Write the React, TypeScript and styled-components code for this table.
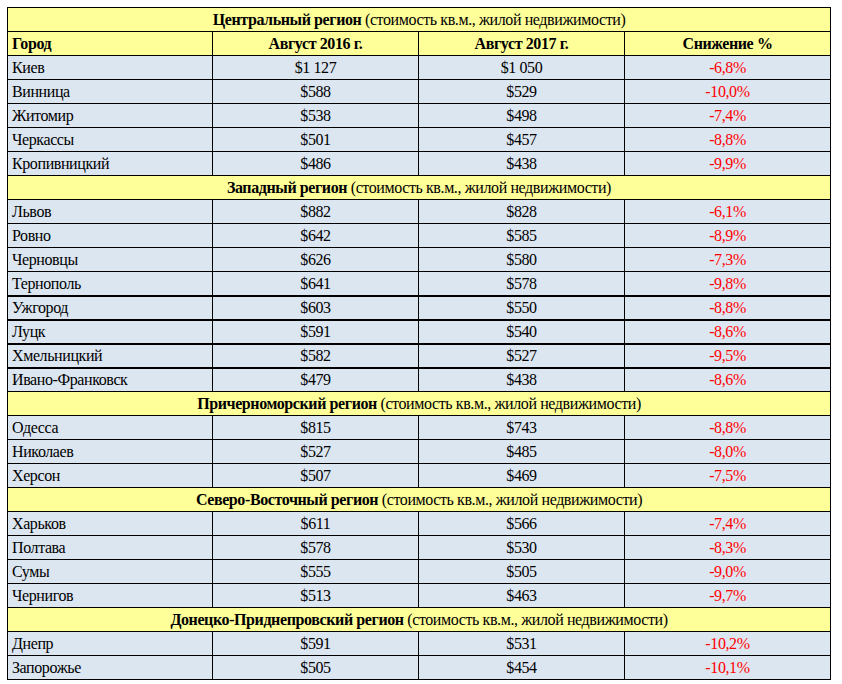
import React from 'react';
import styled, { createGlobalStyle } from 'styled-components';

const GlobalStyle = createGlobalStyle`
  body {
    margin: 0;
    padding: 7px;
    background: #ffffff;
    font-family: "Liberation Serif", "Times New Roman", serif;
  }
`

type Row = { city: string, y2016: string, y2017: string, drop: string, thick?: boolean }
type Region = { name: string, rows: Row[] }

const regions: Region[] = [
  { name: 'Центральный регион', rows: [
    { city: 'Киев', y2016: '$1 127', y2017: '$1 050', drop: '-6,8%' },
    { city: 'Винница', y2016: '$588', y2017: '$529', drop: '-10,0%' },
    { city: 'Житомир', y2016: '$538', y2017: '$498', drop: '-7,4%' },
    { city: 'Черкассы', y2016: '$501', y2017: '$457', drop: '-8,8%' },
    { city: 'Кропивницкий', y2016: '$486', y2017: '$438', drop: '-9,9%' },
  ]},
  { name: 'Западный регион', rows: [
    { city: 'Львов', y2016: '$882', y2017: '$828', drop: '-6,1%' },
    { city: 'Ровно', y2016: '$642', y2017: '$585', drop: '-8,9%' },
    { city: 'Черновцы', y2016: '$626', y2017: '$580', drop: '-7,3%' },
    { city: 'Тернополь', y2016: '$641', y2017: '$578', drop: '-9,8%' },
    { city: 'Ужгород', y2016: '$603', y2017: '$550', drop: '-8,8%', thick: true },
    { city: 'Луцк', y2016: '$591', y2017: '$540', drop: '-8,6%', thick: true },
    { city: 'Хмельницкий', y2016: '$582', y2017: '$527', drop: '-9,5%', thick: true },
    { city: 'Ивано-Франковск', y2016: '$479', y2017: '$438', drop: '-8,6%', thick: true },
  ]},
  { name: 'Причерноморский регион', rows: [
    { city: 'Одесса', y2016: '$815', y2017: '$743', drop: '-8,8%' },
    { city: 'Николаев', y2016: '$527', y2017: '$485', drop: '-8,0%' },
    { city: 'Херсон', y2016: '$507', y2017: '$469', drop: '-7,5%' },
  ]},
  { name: 'Северо-Восточный регион', rows: [
    { city: 'Харьков', y2016: '$611', y2017: '$566', drop: '-7,4%' },
    { city: 'Полтава', y2016: '$578', y2017: '$530', drop: '-8,3%' },
    { city: 'Сумы', y2016: '$555', y2017: '$505', drop: '-9,0%' },
    { city: 'Чернигов', y2016: '$513', y2017: '$463', drop: '-9,7%' },
  ]},
  { name: 'Донецко-Приднепровский регион', rows: [
    { city: 'Днепр', y2016: '$591', y2017: '$531', drop: '-10,2%' },
    { city: 'Запорожье', y2016: '$505', y2017: '$454', drop: '-10,1%' },
  ]},
]

const Table = styled.table`
  border-collapse: collapse;
  table-layout: fixed;
  width: 823px;
  font-family: "Liberation Serif", "Times New Roman", serif;
  font-size: 16px;
  letter-spacing: -0.4px;
  color: #000;
`

const Col = styled.col<{ $w: number }>`
  width: ${p => p.$w}px;
`

const Tr = styled.tr<{ $thick?: boolean }>`
  height: 24px;
  & > td, & > th {
    border-top: ${p => p.$thick ? '2px' : '1px'} solid #000;
  }
`

const Cell = styled.td<{ $left?: boolean, $red?: boolean }>`
  background: #dce6f1;
  border: 1px solid #000;
  padding: 0 4px;
  text-align: ${p => p.$left ? 'left' : 'center'};
  color: ${p => p.$red ? '#ff0000' : '#000'};
  white-space: nowrap;
  line-height: 21px;
`

const Head = styled.th<{ $left?: boolean }>`
  background: #ffff99;
  border: 1px solid #000;
  padding: 0 4px;
  font-weight: bold;
  text-align: ${p => p.$left ? 'left' : 'center'};
  line-height: 21px;
`

const Title = styled.td`
  background: #ffff99;
  border: 1px solid #000;
  text-align: center;
  white-space: nowrap;
  line-height: 21px;
  b { font-weight: bold; }
`

const RegionTitle = ({ name }: { name: string }) => <Tr>
  <Title colSpan={4}><b>{name}</b> (стоимость кв.м., жилой недвижимости)</Title>
</Tr>

function App() {
  return (
    <>
      <GlobalStyle />
      <Table>
        <colgroup>
          <Col $w={205} />
          <Col $w={206} />
          <Col $w={206} />
          <Col $w={206} />
        </colgroup>
        <tbody>
          {regions.map((r, i) => <React.Fragment key={r.name}>
            <RegionTitle name={r.name} />
            {i === 0 && <Tr>
              <Head $left>Город</Head>
              <Head>Август 2016 г.</Head>
              <Head>Август 2017 г.</Head>
              <Head>Снижение %</Head>
            </Tr>}
            {r.rows.map(row => <Tr key={row.city} $thick={row.thick}>
              <Cell $left>{row.city}</Cell>
              <Cell>{row.y2016}</Cell>
              <Cell>{row.y2017}</Cell>
              <Cell $red>{row.drop}</Cell>
            </Tr>)}
          </React.Fragment>)}
        </tbody>
      </Table>
    </>
  );
}

export default App;
